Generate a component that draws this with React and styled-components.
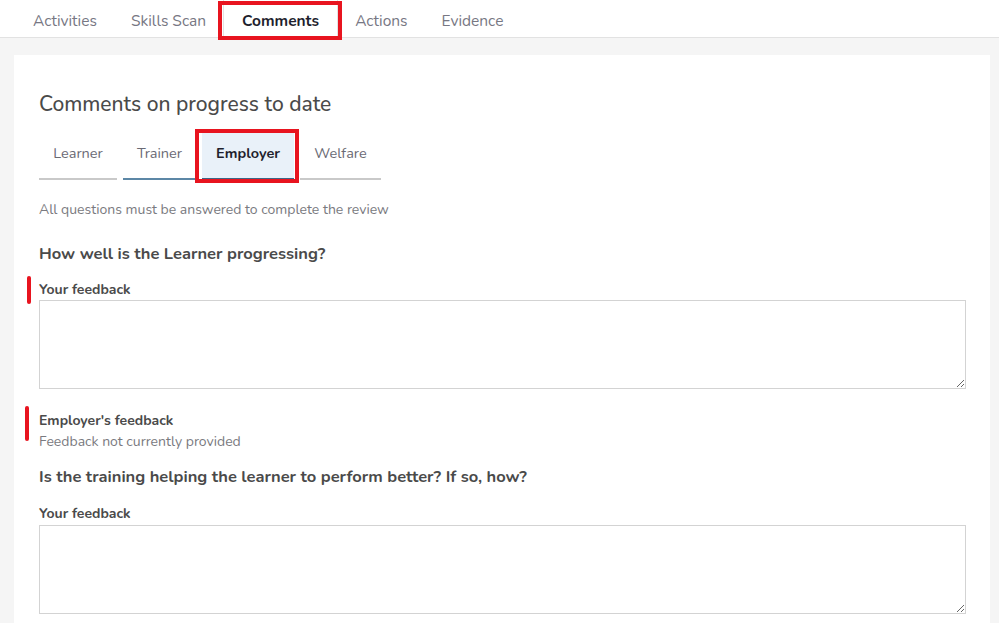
import React from 'react';
import styled, {createGlobalStyle} from 'styled-components';

const GlobalStyle = createGlobalStyle`
  body {
    margin: 0;
    background: #f5f5f5;
    font-family: 'Nunito', 'Open Sans', sans-serif;
    color: #4a4a4a;
  }
`;

const TopNav = styled.nav`
  height: 37px;
  background: #fff;
  border-bottom: 1px solid #e2e2e2;
  display: flex;
  align-items: stretch;
  padding-left: 16px;
`;

const TopTab = styled.div`
  position: relative;
  display: flex;
  align-items: center;
  padding: 4px ${p => (p.active ? '18px' : '17px')} 0;
  font-size: 15.5px;
  color: ${p => (p.active ? '#1f1f2e' : '#777783')};
  font-weight: ${p => (p.active ? 700 : 400)};
  background: #fff;
  ${p => p.active && `border-left: 1px solid #e2e2e2; border-right: 1px solid #e2e2e2;`}

  ${p => p.highlighted && `
    &::after {
      content: '';
      position: absolute;
      z-index: 2;
      left: -6px; right: -5px; top: 1px; bottom: -3px;
      border: 4px solid #e8141f;
    }
  `}
`;

const Page = styled.main`
  padding: 17px 9px 0 14px;
`;

const Card = styled.section`
  background: #fff;
  padding: 36px 25px 20px 25px;
  min-height: 600px;
`;

const Heading = styled.h2`
  margin: 0;
  font-size: 21px;
  font-weight: 500;
  color: #4a4a4a;
  line-height: 26px;
`;

const SubTabs = styled.div`
  display: flex;
  gap: 6px;
  margin-top: 16px;
`;

const SubTab = styled.div`
  position: relative;
  width: ${p => p.w}px;
  height: 39px;
  padding-bottom: 6px;
  box-sizing: content-box;
  display: flex;
  align-items: center;
  justify-content: center;
  font-size: 14.5px;
  color: ${p => (p.active ? '#1f1f2e' : '#6a6a74')};
  font-weight: ${p => (p.active ? 700 : 400)};
  background: ${p => (p.active ? '#e9f1f9' : 'transparent')};
  border-bottom: 2px solid ${p => p.line};

  ${p => p.highlighted && `
    &::after {
      content: '';
      position: absolute;
      left: -7px; right: -5px; top: -4px; bottom: -5px;
      border: 4px solid #e8141f;
    }
  `}
`;

const Note = styled.p`
  margin: 20px 0 0;
  font-size: 14px;
  color: #7a7a80;
`;

const Question = styled.h3`
  margin: ${p => p.top}px 0 0;
  font-size: 16.5px;
  font-weight: 700;
  color: #4a4a4a;
`;

const Field = styled.div`
  position: relative;
  margin-top: ${p => p.top}px;

  ${p => p.marked && `
    &::before {
      content: '';
      position: absolute;
      left: ${p.markLeft}px;
      top: ${p.markTop}px;
      width: 4px;
      height: ${p.markHeight}px;
      border-radius: 2px;
      background: #e8141f;
    }
  `}
`;

const Label = styled.label`
  display: block;
  font-size: 14px;
  font-weight: 700;
  color: #4a4a4a;
  line-height: 18px;
`;

const Muted = styled.div`
  font-size: 14px;
  color: #7a7a80;
  line-height: 20px;
  margin-top: 2px;
`;

const TextArea = styled.textarea`
  display: block;
  box-sizing: border-box;
  width: 927px;
  height: 89px;
  margin-top: ${p => p.gap || 1}px;
  border: 1px solid #d3d3d3;
  border-radius: 0;
  font-family: inherit;
  resize: vertical;
`;

const topTabs = ['Activities', 'Skills Scan', 'Comments', 'Actions', 'Evidence'];
const subTabs = [
  {name: 'Learner', w: 78, line: '#c9c9c9'},
  {name: 'Trainer', w: 73, line: '#5c87a6'},
  {name: 'Employer', w: 92, line: '#3d6687', active: true},
  {name: 'Welfare', w: 81, line: '#c9c9c9'},
];

export default function App() {
  return (
    <>
      <GlobalStyle />
      <TopNav>
        {topTabs.map(t => (
          <TopTab key={t} active={t === 'Comments'} highlighted={t === 'Comments'}>
            {t}
          </TopTab>
        ))}
      </TopNav>
      <Page>
        <Card>
          <Heading>Comments on progress to date</Heading>
          <SubTabs>
            {subTabs.map(t => (
              <SubTab key={t.name} w={t.w} line={t.line} active={t.active} highlighted={t.active}>
                {t.name}
              </SubTab>
            ))}
          </SubTabs>
          <Note>All questions must be answered to complete the review</Note>
          <Question top={23}>How well is the Learner progressing?</Question>
          <Field top={16} marked markLeft={-12} markTop={-5} markHeight={28}>
            <Label>Your feedback</Label>
            <TextArea />
          </Field>
          <Field top={23} marked markLeft={-14} markTop={-6} markHeight={35}>
            <Label>Employer's feedback</Label>
            <Muted>Feedback not currently provided</Muted>
          </Field>
          <Question top={13}>Is the training helping the learner to perform better? If so, how?</Question>
          <Field top={17}>
            <Label>Your feedback</Label>
            <TextArea gap={2} />
          </Field>
        </Card>
      </Page>
    </>
  );
}
